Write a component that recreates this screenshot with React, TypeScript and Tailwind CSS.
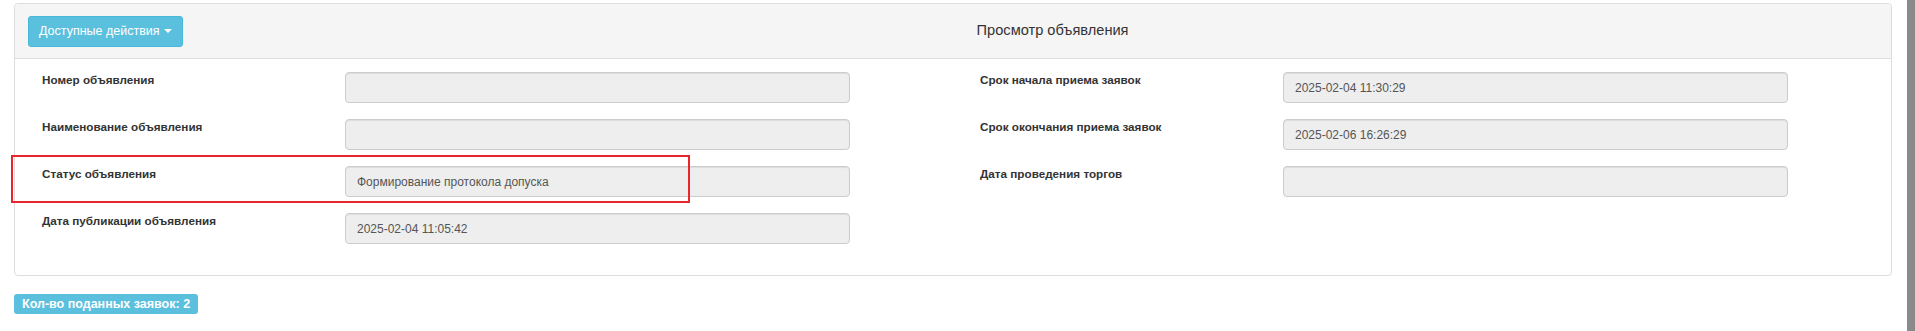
const font = "font-['Liberation_Sans',Arial,sans-serif]";

type Field = { label: string; value?: string };

const leftFields: Field[] = [
  { label: "Номер объявления" },
  { label: "Наименование объявления" },
  { label: "Статус объявления", value: "Формирование протокола допуска" },
  { label: "Дата публикации объявления", value: "2025-02-04 11:05:42" },
];

const rightFields: Field[] = [
  { label: "Срок начала приема заявок", value: "2025-02-04 11:30:29" },
  { label: "Срок окончания приема заявок", value: "2025-02-06 16:26:29" },
  { label: "Дата проведения торгов" },
];

const FieldRow = ({ label, value }: Field) => (
  <div className="flex">
    <div className="w-[303px] text-[11.7px] leading-[16px] font-bold text-[#333]">{label}</div>
    <div className="w-[505px] h-[31px] flex items-center px-[11px] bg-[#eeeeee] border border-[#cccccc] rounded-[4px] shadow-[inset_0_1px_1px_rgba(0,0,0,0.075)] text-[12px] text-[#555]">
      {value}
    </div>
  </div>
);

export default function App() {
  return (
    <div className={`flex w-[1915px] h-[331px] bg-white ${font}`}>
      <div className="flex-1 pl-[14px] pr-[15px] pt-[3px]">
        <div className="border border-[#dddddd] rounded-[4px]">
          <div className="flex items-center h-[55px] bg-[#f5f5f5] border-b border-[#dddddd] rounded-t-[4px] pl-[13px]">
            <button className="h-[31px] px-[10px] flex items-center gap-[4px] bg-[#5bc0de] border border-[#46b8da] rounded-[3px] text-white text-[12.5px]">
              Доступные действия
              <span className="w-0 h-0 border-x-[4px] border-x-transparent border-t-[4px] border-t-white" />
            </button>
            <h3 className="ml-[794px] text-[14.6px] text-[#333]">Просмотр объявления</h3>
          </div>
          <div className="relative grid grid-cols-2 pt-[13px] pb-[31px]">
            <div className="flex flex-col gap-[16px] pl-[27px]">
              {leftFields.map((f) => (
                <FieldRow key={f.label} {...f} />
              ))}
            </div>
            <div className="flex flex-col gap-[16px] pl-[27px]">
              {rightFields.map((f) => (
                <FieldRow key={f.label} {...f} />
              ))}
            </div>
            <div className="absolute left-[-4px] top-[96px] w-[679px] h-[48px] border-2 border-[#e8262b]" />
          </div>
        </div>
        <div className="mt-[15px]">
          <span className="inline-block h-[20px] leading-[20px] px-[8px] rounded-[3px] bg-[#5bc0de] text-white text-[12.5px] font-bold">
            Кол-во поданных заявок: 2
          </span>
        </div>
      </div>
      <div className="w-[8px] bg-[#8a8a8a]" />
    </div>
  );
}
